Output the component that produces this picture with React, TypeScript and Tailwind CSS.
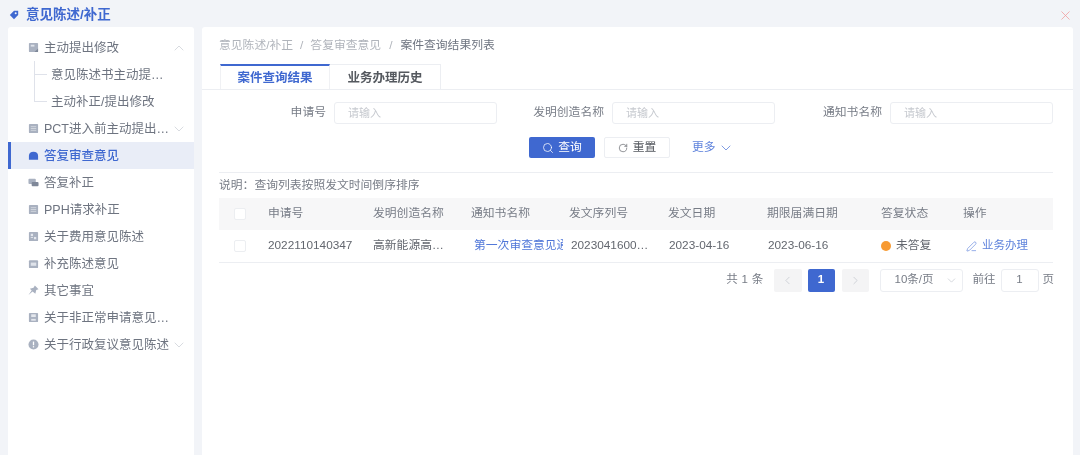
import { ChevronDown, ChevronLeft, ChevronRight, ChevronUp, PenLine, RotateCw, Search, X } from "lucide-react";
import type { ReactNode } from "react";

const G = "#a9b1c0";

const Icons: Record<string, ReactNode> = {
  doc: <><rect x="1" y="1" width="10" height="10" rx="1" fill={G} /><rect x="3" y="3" width="4" height="2" fill="#dfe3ea" /><path d="M7 11l4-4v4z" fill="#7f8899" /></>,
  book: <><rect x="1" y="1" width="10" height="10" rx="1" fill={G} /><path d="M3 4h6M3 6h6M3 8h6" stroke="#e4e7ed" strokeWidth=".7" /></>,
  active: <path d="M1 6.500C1 3.500 3 2 6 2s5 1.500 5 4.500V10.500H1z" fill="#3f68d0" />,
  chat: <><rect x="0.500" y="2" width="8" height="5.500" rx="1" fill={G} /><rect x="4" y="5.500" width="7.500" height="4.500" rx="1" fill="#7f8899" /></>,
  fee: <><rect x="1" y="1" width="10" height="10" rx="1" fill={G} /><rect x="3" y="3" width="2.500" height="2.500" fill="#e4e7ed" /><rect x="6.500" y="6.500" width="2.500" height="2.500" fill="#e4e7ed" /><rect x="3" y="6.500" width="2.500" height="1" fill="#e4e7ed" /></>,
  case: <><rect x="1" y="2.500" width="10" height="8.500" rx="1" fill={G} /><rect x="3" y="5" width="6" height="3.500" fill="#dfe3ea" /></>,
  pin: <path d="M7.500 0.500l4 4-2.500 1-1 4L5 7l-4.500 4L4 6 2 4l4-1z" fill={G} />,
  save: <><rect x="1" y="1" width="10" height="10" rx="1" fill={G} /><rect x="3.500" y="2.500" width="5" height="3" fill="#e4e7ed" /><rect x="3.500" y="7.500" width="5" height="2" fill="#e4e7ed" /></>,
  info: <><circle cx="6" cy="6" r="5.500" fill={G} /><rect x="5.300" y="2.800" width="1.400" height="4" fill="#fff" /><rect x="5.300" y="7.800" width="1.400" height="1.400" fill="#fff" /></>,
};

function MenuIcon({ name }: { name: string }) {
  return (
    <svg viewBox="0 0 12 12" className="w-[11px] h-[11px] shrink-0">
      {Icons[name]}
    </svg>
  );
}

function MenuItem({ icon, label, arrow }: { icon: string; label: string; arrow?: "up" | "down" }) {
  return (
    <div className="h-[27px] flex items-center pl-[20px] gap-[5px] text-[#6e7480]">
      <MenuIcon name={icon} />
      <span className="w-[127px] pt-[2px] truncate">{label}</span>
      {arrow === "up" && <ChevronUp className="-ml-[5px] w-[16px] h-[16px] text-[#c4c8d0] shrink-0" strokeWidth={1} />}
      {arrow === "down" && <ChevronDown className="-ml-[5px] w-[16px] h-[16px] text-[#c4c8d0] shrink-0" strokeWidth={1} />}
    </div>
  );
}

function Sidebar() {
  return (
    <aside className="w-[186px] shrink-0 bg-white rounded-t-[3px] pt-[7px]">
      <MenuItem icon="doc" label="主动提出修改" arrow="up" />
      <div className="pl-[26px] text-[#6e7480]">
        <div className="h-[27px] flex items-center">
          <div className="w-[13px] h-full border-l border-[#dfe2ea] flex items-center shrink-0">
            <div className="h-px w-full bg-[#dfe2ea]" />
          </div>
          <span className="ml-[4px] pt-[2px] w-[115px] truncate">意见陈述书主动提出修改</span>
        </div>
        <div className="h-[27px] flex items-center">
          <div className="w-[13px] h-[14px] border-l border-b border-[#dfe2ea] self-start shrink-0" />
          <span className="ml-[4px] pt-[2px]">主动补正/提出修改</span>
        </div>
      </div>
      <MenuItem icon="book" label="PCT进入前主动提出修改" arrow="down" />
      <div className="h-[27px] flex items-center bg-[#e9edf7] border-l-[3px] border-[#3f68d0] pl-[17px] gap-[5px] text-[#3f68d0] font-medium">
        <MenuIcon name="active" />
        <span className="pt-[2px]">答复审查意见</span>
      </div>
      <MenuItem icon="chat" label="答复补正" />
      <MenuItem icon="book" label="PPH请求补正" />
      <MenuItem icon="fee" label="关于费用意见陈述" />
      <MenuItem icon="case" label="补充陈述意见" />
      <MenuItem icon="pin" label="其它事宜" />
      <MenuItem icon="save" label="关于非正常申请意见陈述" />
      <MenuItem icon="info" label="关于行政复议意见陈述" arrow="down" />
    </aside>
  );
}

function Field({ label }: { label: string }) {
  return (
    <div className="flex items-center justify-end gap-[8px]">
      <span className="text-[11.800px] text-[#777c86]">{label}</span>
      <div className="w-[163px] h-[22px] border border-[#eceef2] rounded-[3px] flex items-center pl-[13px] text-[11px] text-[#c6c9cf]">
        请输入
      </div>
    </div>
  );
}

const TABLE_COLS = "grid grid-cols-[49px_105px_98px_98px_99px_99px_114px_82px_1fr] items-center";

function Checkbox() {
  return (
    <div className="ml-[15px] w-[12px] h-[12px] bg-white border border-[#eceef1] rounded-[2px]" />
  );
}

function Main() {
  const headers = ["申请号", "发明创造名称", "通知书名称", "发文序列号", "发文日期", "期限届满日期", "答复状态", "操作"];
  return (
    <main className="w-[871px] shrink-0 bg-white rounded-t-[3px]">
      <div className="h-[37px] pl-[17px] pt-[9px] text-[11.800px] leading-[18px] text-[#b0b4bb]">
        意见陈述/补正<span className="mx-[7px]">/</span>答复审查意见<span className="mx-[8px]">/</span>
        <span className="text-[#6e7480]">案件查询结果列表</span>
      </div>
      <div className="h-[26px] pl-[18px] flex border-b border-[#eceef2]">
        <div className="w-[110px] h-[25px] pt-[2px] border-t-2 border-x border-t-[#3f68d0] border-x-[#f0f1f4] flex items-center justify-center font-semibold text-[#3f68d0]">
          案件查询结果
        </div>
        <div className="w-[111px] h-[25px] pt-[2px] border-t border-r border-[#eceef2] flex items-center justify-center font-semibold text-[#55595f]">
          业务办理历史
        </div>
      </div>
      <div className="pl-[17px] pr-[20px]">
        <div className="grid grid-cols-3 mt-[12px]">
          <Field label="申请号" />
          <Field label="发明创造名称" />
          <Field label="通知书名称" />
        </div>
        <div className="mt-[13px] ml-[310px] flex items-center h-[21px]">
          <button className="w-[66px] h-[21px] rounded-[2px] bg-[#3f68d0] text-white flex items-center justify-center gap-[4px] text-[11.800px]">
            <Search className="w-[12px] h-[12px]" strokeWidth={1.5} />
            查询
          </button>
          <button className="ml-[9px] w-[66px] h-[21px] rounded-[2px] border border-[#eceef2] text-[#55595f] flex items-center justify-center gap-[5px] text-[11.800px]">
            <RotateCw className="w-[10px] h-[10px]" strokeWidth={1.5} />
            重置
          </button>
          <span className="ml-[22px] flex items-center gap-[2px] text-[#5f83dc] text-[11.800px]">
            更多
            <ChevronDown className="w-[16px] h-[16px]" strokeWidth={1.2} />
          </span>
        </div>
        <div className="mt-[14px] border-t border-[#eceef2] pt-[3px] h-[26px] leading-[18px] text-[11.800px] text-[#777c86]">
          说明：查询列表按照发文时间倒序排序
        </div>
        <div className={`${TABLE_COLS} h-[32px] bg-[#f7f7f8] text-[11.800px] text-[#777c86]`}>
          <Checkbox />
          {headers.map((h) => (
            <span key={h}>{h}</span>
          ))}
        </div>
        <div className={`${TABLE_COLS} h-[33px] border-b border-[#eceef2] text-[11.800px] text-[#63676f]`}>
          <Checkbox />
          <span>2022110140347</span>
          <span>高新能源高…</span>
          <span className="pl-[3px] w-[92px] whitespace-nowrap overflow-hidden text-[#4f76d8]">第一次审查意见通知书</span>
          <span className="pl-[2px]">2023041600…</span>
          <span className="pl-[1px]">2023-04-16</span>
          <span className="pl-[1px]">2023-06-16</span>
          <span className="flex items-center gap-[5px]">
            <span className="w-[10px] h-[10px] rounded-full bg-[#f79a32]" />
            未答复
          </span>
          <span className="pl-[3px] flex items-center gap-[5px] text-[11.500px] text-[#5f83dc]">
            <PenLine className="w-[11px] h-[11px]" strokeWidth={1.4} />
            业务办理
          </span>
        </div>
        <div className="mt-[5px] -mr-[1px] flex items-center justify-end h-[24px] text-[11.500px] text-[#777c86]">
          <span className="tracking-[0.3px]">共 1 条</span>
          <span className="ml-[10px] w-[28px] h-[23px] rounded-[2px] bg-[#f4f4f5] flex items-center justify-center text-[#c0c4cc]">
            <ChevronLeft className="w-[13px] h-[13px]" strokeWidth={1.3} />
          </span>
          <span className="ml-[6px] w-[27px] h-[23px] rounded-[2px] bg-[#3f68d0] text-white font-semibold flex items-center justify-center">
            1
          </span>
          <span className="ml-[7px] w-[27px] h-[23px] rounded-[2px] bg-[#f4f4f5] flex items-center justify-center text-[#c0c4cc]">
            <ChevronRight className="w-[13px] h-[13px]" strokeWidth={1.3} />
          </span>
          <span className="ml-[11px] w-[83px] h-[23px] rounded-[3px] border border-[#eceef2] flex items-center pl-[14px] pr-[4px] justify-between">
            10条/页
            <ChevronDown className="w-[13px] h-[13px] text-[#c0c4cc]" strokeWidth={1.2} />
          </span>
          <span className="ml-[10px]">前往</span>
          <span className="ml-[5px] w-[38px] h-[23px] rounded-[3px] border border-[#eceef2] flex items-center justify-center">1</span>
          <span className="ml-[4px]">页</span>
        </div>
      </div>
    </main>
  );
}

export default function App() {
  return (
    <div className="w-[1080px] h-[455px] overflow-hidden bg-[#f2f4f8] blur-[0.5px] text-[12.500px] font-['Liberation_Sans','Noto_Sans_CJK_SC',sans-serif]">
      <header className="h-[27px] flex items-center pt-[3px] pl-[9px] pr-[7px] text-[#3f68d0] font-semibold text-[13.500px]">
        <svg viewBox="0 0 12 12" className="w-[10px] h-[10px]">
          <path d="M1 6l5-5h5v5l-5 5z" fill="#3f68d0" />
          <circle cx="8" cy="4" r="1.200" fill="#f2f4f8" />
        </svg>
        <span className="ml-[7px]">意见陈述/补正</span>
        <X className="ml-auto w-[15px] h-[15px] text-[#f29a9a]" strokeWidth={1.2} />
      </header>
      <div className="flex h-[428px] pl-[8px] gap-[8px]">
        <Sidebar />
        <Main />
      </div>
    </div>
  );
}
